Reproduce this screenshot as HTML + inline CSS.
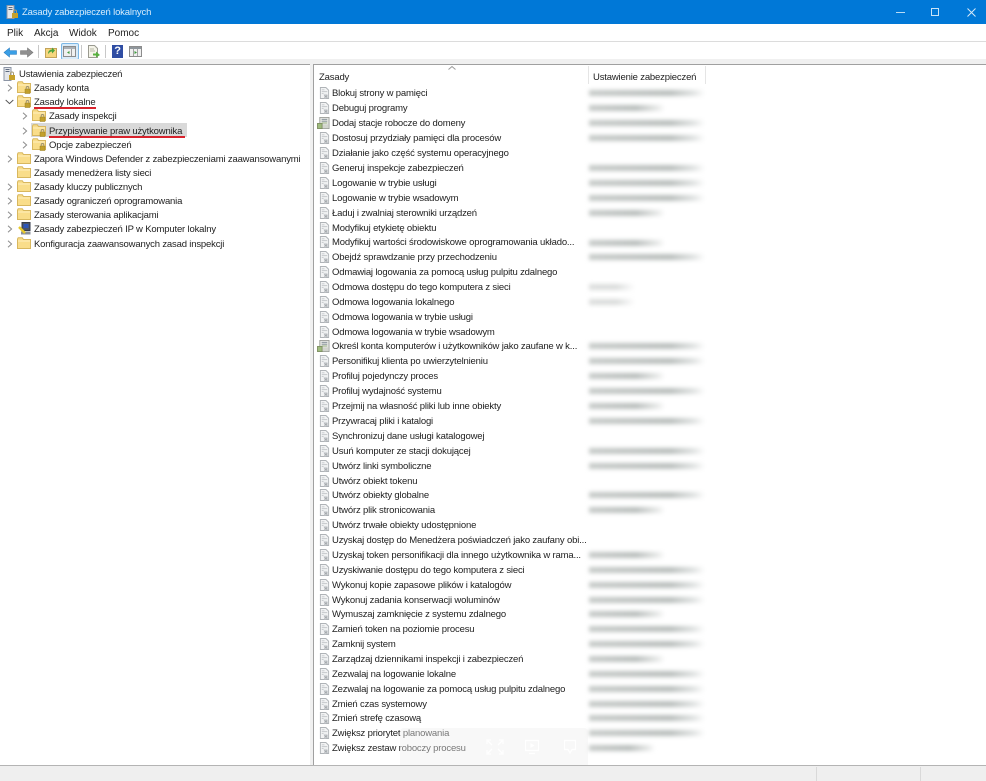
<!DOCTYPE html>
<html lang="pl"><head><meta charset="utf-8"><title>Zasady zabezpieczeń lokalnych</title>
<style>
html,body{margin:0;padding:0;background:#fff}
body{width:986px;height:781px;position:relative;overflow:hidden;font:9.5px/14px "Liberation Sans",sans-serif;color:#222;letter-spacing:-.17px}
.a{position:absolute}
.t,.r,.n{position:absolute;white-space:nowrap;height:14px;margin-top:2px;filter:blur(.3px)}
.r{left:332px}
.ic{position:absolute;width:11px;height:12px;transform:translateY(1px)}
.b{position:absolute;left:589px;height:6px;filter:blur(2.2px)}
.l{width:116px;background:linear-gradient(90deg,#c6cac8,#b8bdbb 70%,#dfe2e1 90%,#fff)}
.s{width:76px;background:linear-gradient(90deg,#c6cac8,#b8bdbb 62%,#e6e8e7 90%,#fff)}
.f{width:46px;background:linear-gradient(90deg,#dcdedd,#dadcdb 60%,#fff)}
svg{position:absolute;overflow:visible}
</style></head><body>
<svg width="0" height="0" style="position:absolute">
<defs>
<symbol id="doc" viewBox="0 0 12 13"><path d="M1.500.5h6l3 3v9h-9z" fill="#f2f3f4" stroke="#afb3b7"/><path d="M3 3h3M3 5h6M3 7h2" stroke="#c4c8cb"/><path d="M5 7.500l4 0 1 4-4 1z" fill="#d3d6d9"/><path d="M6 9l3 2.500M9 9l-3 2.500" stroke="#a0a5a9" stroke-width=".8"/></symbol>
<symbol id="srv" viewBox="0 0 14 13"><path d="M3 .5h10v12H3z" fill="#e7e8e4" stroke="#9a9d98"/><path d="M5 2.500h6M5 4.500h6" stroke="#7c8790"/><path d="M5 6.500h6" stroke="#96ae7e"/><path d="M.5 7h5v5.500h-5z" fill="#9fbc7d" stroke="#7f8f63"/><path d="M6 8h6v4H6z" fill="#d2d5ce"/></symbol>
<symbol id="fl" viewBox="0 0 14 12"><path d="M.5 2V11.500H13.500V2.500H6.500L5.300.8H1.200z" fill="#f9dd8a" stroke="#d8b75e"/><path d="M1 4H13" stroke="#fff0bd"/></symbol>
<symbol id="lk" viewBox="0 0 14 13"><path d="M.5 2V11.500H13.500V2.500H6.500L5.300.8H1.200z" fill="#f9dd8a" stroke="#d8b75e"/><path d="M1 4H13" stroke="#fff0bd"/><path d="M8 8h5v4.500H8z" fill="#c2a02c" stroke="#9a7f20" stroke-width=".5"/><path d="M9.200 8V6.800a1.300 1.300 0 012.600 0V8" fill="none" stroke="#9a9072" stroke-width=".9"/></symbol>
<symbol id="ch" viewBox="0 0 6 8"><path d="M1 .7L4.600 4 1 7.300" fill="none" stroke="#8c8c8c" stroke-width="1"/></symbol>
</defs></svg>

<!-- title bar -->
<div class="a" style="left:0;top:0;width:986px;height:24px;background:#0078d7"></div>
<svg style="left:6px;top:5px" width="13" height="14" viewBox="0 0 13 14"><path d="M1 .5h7v13H1z" fill="#e4e6ea" stroke="#8c95a5"/><path d="M2.500 2.500h4M2.500 4.500h4" stroke="#5d6b80"/><path d="M6 8h6v5H6z" fill="#c5a02a"/><path d="M7.500 8V6.500a1.500 1.500 0 013 0V8" fill="none" stroke="#a59a76"/></svg>
<div class="t" style="left:22px;top:4px;color:#d8ecfb">Zasady zabezpieczeń lokalnych</div>
<div class="a" style="left:896px;top:12px;width:9px;height:1px;background:#b9dcf5"></div>
<div class="a" style="left:931px;top:8px;width:6px;height:6px;border:1px solid #c9e3f6"></div>
<svg style="left:967px;top:8px" width="9" height="9"><path d="M.5.500l8 8M8.500.500l-8 8" stroke="#d5e9f8" stroke-width="1"/></svg>

<!-- menu -->
<div class="t" style="left:7px;top:25px;font-size:10px;letter-spacing:0">Plik</div>
<div class="t" style="left:34px;top:25px;font-size:10px;letter-spacing:0">Akcja</div>
<div class="t" style="left:69px;top:25px;font-size:10px;letter-spacing:0">Widok</div>
<div class="t" style="left:108px;top:25px;font-size:10px;letter-spacing:0">Pomoc</div>
<div class="a" style="left:0;top:41px;width:986px;height:1px;background:#dcdcdc"></div>

<!-- toolbar -->
<svg style="left:3px;top:47px" width="14" height="11"><path d="M1 5.500l5.500-4.500v2.700h7v3.600h-7V10z" fill="#3a9fe6" stroke="#2a7fc4" stroke-width=".6"/></svg>
<svg style="left:20px;top:47px" width="14" height="11"><path d="M13 5.500L7.500 1v2.700h-7v3.600h7V10z" fill="#8f8f8f" stroke="#777" stroke-width=".6"/></svg>
<div class="a" style="left:38px;top:45px;width:1px;height:13px;background:#c8c8c8"></div>
<svg style="left:45px;top:46px" width="12" height="12"><path d="M.5 2.500h11v9H.5z" fill="#f6d67e" stroke="#c2a35a"/><path d="M3 8C3 5 5 3.500 7 3.500V1.500l3 3-3 3V5.500C5 5.500 4 7 3 8z" fill="#4ba33c"/></svg>
<div class="a" style="left:61px;top:43px;width:16px;height:15px;background:#d9ebf9;border:1px solid #7db8e6;border-radius:2px"></div>
<svg style="left:63px;top:46px" width="13" height="11"><path d="M.5.500h12v10H.5z" fill="#f0f0f0" stroke="#8c8c8c"/><path d="M1 1h11v2H1z" fill="#aab0b6"/><path d="M8.500 3v7" stroke="#9a9a9a"/><path d="M6.500 5v3L4 6.500z" fill="#3d9b3d"/></svg>
<div class="a" style="left:81px;top:45px;width:1px;height:13px;background:#c8c8c8"></div>
<svg style="left:87px;top:45px" width="14" height="13"><path d="M1.500.500h6l3 3v9h-9z" fill="#f4f3e8" stroke="#9a9a90"/><path d="M3 4h4M3 6h5" stroke="#b9b9a8"/><path d="M6 8.500h3V6.500l4 3.500-4 2.500v-2H6z" fill="#58b03f"/></svg>
<div class="a" style="left:105px;top:45px;width:1px;height:13px;background:#c8c8c8"></div>
<div class="a" style="left:112px;top:45px;width:11px;height:13px;background:#2f4da3;color:#fff;font:bold 11px/13px 'Liberation Sans',sans-serif;text-align:center">?</div>
<svg style="left:129px;top:46px" width="14" height="12"><path d="M.5.500h12v10H.5z" fill="#f0f0f0" stroke="#8c8c8c"/><path d="M1 1h11v2H1z" fill="#8f969c"/><path d="M4.500 3v7M8.500 3v7" stroke="#a2a2a2"/><path d="M5.500 5v3L8 6.500z" fill="#3d9b3d"/></svg>

<!-- chrome -->
<div class="a" style="left:0;top:59px;width:986px;height:5px;background:#f0f0f0"></div>
<div class="a" style="left:0;top:64px;width:311px;height:1px;background:#a0a0a0"></div>
<div class="a" style="left:313px;top:64px;width:673px;height:1px;background:#a0a0a0"></div>
<div class="a" style="left:310px;top:64px;width:3px;height:702px;background:#f0f0f0"></div>
<div class="a" style="left:313px;top:65px;width:1px;height:700px;background:#a0a0a0"></div>

<!-- tree -->
<svg style="left:3px;top:67px" width="13" height="14" viewBox="0 0 13 14"><path d="M1 .5h7v13H1z" fill="#e4e6ea" stroke="#8c95a5"/><path d="M2.500 2.500h4M2.500 4.500h4" stroke="#5d6b80"/><path d="M6 8h6v5H6z" fill="#c5a02a"/><path d="M7.500 8V6.500a1.500 1.500 0 013 0V8" fill="none" stroke="#a59a76"/></svg>
<div class="n" style="left:19px;top:66px">Ustawienia zabezpieczeń</div>

<svg style="left:7px;top:84px" width="6" height="8"><use href="#ch"/></svg>
<svg style="left:17px;top:81px" width="14" height="13"><use href="#lk"/></svg>
<div class="n" style="left:34px;top:80px">Zasady konta</div>

<svg style="left:5px;top:99px" width="9" height="6"><path d="M.7 1L4.500 4.600 8.300 1" fill="none" stroke="#555" stroke-width="1"/></svg>
<svg style="left:17px;top:95px" width="14" height="13"><use href="#lk"/></svg>
<div class="n" style="left:34px;top:94px">Zasady lokalne</div>
<div class="a" style="left:34px;top:107px;width:62px;height:1.500px;background:#d8222c"></div>

<svg style="left:22px;top:112px" width="6" height="8"><use href="#ch"/></svg>
<svg style="left:32px;top:109px" width="14" height="13"><use href="#lk"/></svg>
<div class="n" style="left:49px;top:108px">Zasady inspekcji</div>

<div class="a" style="left:31px;top:123px;width:156px;height:14px;background:#d9d9d9"></div>
<svg style="left:22px;top:127px" width="6" height="8"><use href="#ch"/></svg>
<svg style="left:32px;top:124px" width="14" height="13"><use href="#lk"/></svg>
<div class="n" style="left:49px;top:123px">Przypisywanie praw użytkownika</div>
<div class="a" style="left:49px;top:136px;width:136px;height:1.500px;background:#d8222c"></div>

<svg style="left:22px;top:141px" width="6" height="8"><use href="#ch"/></svg>
<svg style="left:32px;top:138px" width="14" height="13"><use href="#lk"/></svg>
<div class="n" style="left:49px;top:137px">Opcje zabezpieczeń</div>

<svg style="left:7px;top:155px" width="6" height="8"><use href="#ch"/></svg>
<svg style="left:17px;top:152px" width="14" height="12"><use href="#fl"/></svg>
<div class="n" style="left:34px;top:151px">Zapora Windows Defender z zabezpieczeniami zaawansowanymi</div>

<svg style="left:17px;top:166px" width="14" height="12"><use href="#fl"/></svg>
<div class="n" style="left:34px;top:165px">Zasady menedżera listy sieci</div>

<svg style="left:7px;top:183px" width="6" height="8"><use href="#ch"/></svg>
<svg style="left:17px;top:180px" width="14" height="12"><use href="#fl"/></svg>
<div class="n" style="left:34px;top:179px">Zasady kluczy publicznych</div>

<svg style="left:7px;top:197px" width="6" height="8"><use href="#ch"/></svg>
<svg style="left:17px;top:194px" width="14" height="12"><use href="#fl"/></svg>
<div class="n" style="left:34px;top:193px">Zasady ograniczeń oprogramowania</div>

<svg style="left:7px;top:211px" width="6" height="8"><use href="#ch"/></svg>
<svg style="left:17px;top:208px" width="14" height="12"><use href="#fl"/></svg>
<div class="n" style="left:34px;top:207px">Zasady sterowania aplikacjami</div>

<svg style="left:7px;top:225px" width="6" height="8"><use href="#ch"/></svg>
<svg style="left:18px;top:222px" width="13" height="13"><path d="M4 .5h8v8H4z" fill="#4a5468" stroke="#333a48"/><path d="M5.500 2h5v4h-5z" fill="#2b55b8"/><path d="M3 9.500h9.500v3H3z" fill="#8a8f98"/><path d="M1 5l6 6" stroke="#e8c92a" stroke-width="2.500"/></svg>
<div class="n" style="left:34px;top:221px">Zasady zabezpieczeń IP w Komputer lokalny</div>

<svg style="left:7px;top:240px" width="6" height="8"><use href="#ch"/></svg>
<svg style="left:17px;top:237px" width="14" height="12"><use href="#fl"/></svg>
<div class="n" style="left:34px;top:236px">Konfiguracja zaawansowanych zasad inspekcji</div>

<!-- list header -->
<svg style="left:448px;top:66px" width="8" height="4"><path d="M.5 3.500L4 .5l3.500 3" fill="none" stroke="#9a9a9a"/></svg>
<div class="a" style="left:588px;top:66px;width:1px;height:18px;background:#e5e5e5"></div>
<div class="a" style="left:705px;top:66px;width:1px;height:18px;background:#e5e5e5"></div>
<div class="t" style="left:319px;top:69px">Zasady</div>
<div class="t" style="left:593px;top:69px">Ustawienie zabezpieczeń</div>

<!-- list rows -->
<div class="r" style="top:85px">Blokuj strony w pamięci</div>
<div class="r" style="top:100px">Debuguj programy</div>
<div class="r" style="top:115px">Dodaj stacje robocze do domeny</div>
<div class="r" style="top:130px">Dostosuj przydziały pamięci dla procesów</div>
<div class="r" style="top:145px">Działanie jako część systemu operacyjnego</div>
<div class="r" style="top:160px">Generuj inspekcje zabezpieczeń</div>
<div class="r" style="top:175px">Logowanie w trybie usługi</div>
<div class="r" style="top:190px">Logowanie w trybie wsadowym</div>
<div class="r" style="top:205px">Ładuj i zwalniaj sterowniki urządzeń</div>
<div class="r" style="top:220px">Modyfikuj etykietę obiektu</div>
<div class="r" style="top:234px">Modyfikuj wartości środowiskowe oprogramowania układo...</div>
<div class="r" style="top:249px">Obejdź sprawdzanie przy przechodzeniu</div>
<div class="r" style="top:264px">Odmawiaj logowania za pomocą usług pulpitu zdalnego</div>
<div class="r" style="top:279px">Odmowa dostępu do tego komputera z sieci</div>
<div class="r" style="top:294px">Odmowa logowania lokalnego</div>
<div class="r" style="top:309px">Odmowa logowania w trybie usługi</div>
<div class="r" style="top:324px">Odmowa logowania w trybie wsadowym</div>
<div class="r" style="top:338px">Określ konta komputerów i użytkowników jako zaufane w k...</div>
<div class="r" style="top:353px">Personifikuj klienta po uwierzytelnieniu</div>
<div class="r" style="top:368px">Profiluj pojedynczy proces</div>
<div class="r" style="top:383px">Profiluj wydajność systemu</div>
<div class="r" style="top:398px">Przejmij na własność pliki lub inne obiekty</div>
<div class="r" style="top:413px">Przywracaj pliki i katalogi</div>
<div class="r" style="top:428px">Synchronizuj dane usługi katalogowej</div>
<div class="r" style="top:443px">Usuń komputer ze stacji dokującej</div>
<div class="r" style="top:458px">Utwórz linki symboliczne</div>
<div class="r" style="top:473px">Utwórz obiekt tokenu</div>
<div class="r" style="top:487px">Utwórz obiekty globalne</div>
<div class="r" style="top:502px">Utwórz plik stronicowania</div>
<div class="r" style="top:517px">Utwórz trwałe obiekty udostępnione</div>
<div class="r" style="top:532px">Uzyskaj dostęp do Menedżera poświadczeń jako zaufany obi...</div>
<div class="r" style="top:547px">Uzyskaj token personifikacji dla innego użytkownika w rama...</div>
<div class="r" style="top:562px">Uzyskiwanie dostępu do tego komputera z sieci</div>
<div class="r" style="top:577px">Wykonuj kopie zapasowe plików i katalogów</div>
<div class="r" style="top:592px">Wykonuj zadania konserwacji woluminów</div>
<div class="r" style="top:606px">Wymuszaj zamknięcie z systemu zdalnego</div>
<div class="r" style="top:621px">Zamień token na poziomie procesu</div>
<div class="r" style="top:636px">Zamknij system</div>
<div class="r" style="top:651px">Zarządzaj dziennikami inspekcji i zabezpieczeń</div>
<div class="r" style="top:666px">Zezwalaj na logowanie lokalne</div>
<div class="r" style="top:681px">Zezwalaj na logowanie za pomocą usług pulpitu zdalnego</div>
<div class="r" style="top:696px">Zmień czas systemowy</div>
<div class="r" style="top:710px">Zmień strefę czasową</div>
<div class="r" style="top:725px">Zwiększ priorytet planowania</div>
<div class="r" style="top:740px">Zwiększ zestaw roboczy procesu</div>

<!-- list icons -->
<svg class="ic" style="left:319px;top:86px"><use href="#doc"/></svg>
<svg class="ic" style="left:319px;top:101px"><use href="#doc"/></svg>
<svg class="ic" style="left:317px;top:116px;width:13px"><use href="#srv"/></svg>
<svg class="ic" style="left:319px;top:131px"><use href="#doc"/></svg>
<svg class="ic" style="left:319px;top:146px"><use href="#doc"/></svg>
<svg class="ic" style="left:319px;top:161px"><use href="#doc"/></svg>
<svg class="ic" style="left:319px;top:176px"><use href="#doc"/></svg>
<svg class="ic" style="left:319px;top:191px"><use href="#doc"/></svg>
<svg class="ic" style="left:319px;top:206px"><use href="#doc"/></svg>
<svg class="ic" style="left:319px;top:221px"><use href="#doc"/></svg>
<svg class="ic" style="left:319px;top:235px"><use href="#doc"/></svg>
<svg class="ic" style="left:319px;top:250px"><use href="#doc"/></svg>
<svg class="ic" style="left:319px;top:265px"><use href="#doc"/></svg>
<svg class="ic" style="left:319px;top:280px"><use href="#doc"/></svg>
<svg class="ic" style="left:319px;top:295px"><use href="#doc"/></svg>
<svg class="ic" style="left:319px;top:310px"><use href="#doc"/></svg>
<svg class="ic" style="left:319px;top:325px"><use href="#doc"/></svg>
<svg class="ic" style="left:317px;top:339px;width:13px"><use href="#srv"/></svg>
<svg class="ic" style="left:319px;top:354px"><use href="#doc"/></svg>
<svg class="ic" style="left:319px;top:369px"><use href="#doc"/></svg>
<svg class="ic" style="left:319px;top:384px"><use href="#doc"/></svg>
<svg class="ic" style="left:319px;top:399px"><use href="#doc"/></svg>
<svg class="ic" style="left:319px;top:414px"><use href="#doc"/></svg>
<svg class="ic" style="left:319px;top:429px"><use href="#doc"/></svg>
<svg class="ic" style="left:319px;top:444px"><use href="#doc"/></svg>
<svg class="ic" style="left:319px;top:459px"><use href="#doc"/></svg>
<svg class="ic" style="left:319px;top:474px"><use href="#doc"/></svg>
<svg class="ic" style="left:319px;top:488px"><use href="#doc"/></svg>
<svg class="ic" style="left:319px;top:503px"><use href="#doc"/></svg>
<svg class="ic" style="left:319px;top:518px"><use href="#doc"/></svg>
<svg class="ic" style="left:319px;top:533px"><use href="#doc"/></svg>
<svg class="ic" style="left:319px;top:548px"><use href="#doc"/></svg>
<svg class="ic" style="left:319px;top:563px"><use href="#doc"/></svg>
<svg class="ic" style="left:319px;top:578px"><use href="#doc"/></svg>
<svg class="ic" style="left:319px;top:593px"><use href="#doc"/></svg>
<svg class="ic" style="left:319px;top:607px"><use href="#doc"/></svg>
<svg class="ic" style="left:319px;top:622px"><use href="#doc"/></svg>
<svg class="ic" style="left:319px;top:637px"><use href="#doc"/></svg>
<svg class="ic" style="left:319px;top:652px"><use href="#doc"/></svg>
<svg class="ic" style="left:319px;top:667px"><use href="#doc"/></svg>
<svg class="ic" style="left:319px;top:682px"><use href="#doc"/></svg>
<svg class="ic" style="left:319px;top:697px"><use href="#doc"/></svg>
<svg class="ic" style="left:319px;top:711px"><use href="#doc"/></svg>
<svg class="ic" style="left:319px;top:726px"><use href="#doc"/></svg>
<svg class="ic" style="left:319px;top:741px"><use href="#doc"/></svg>

<!-- blurred values -->
<div class="b l" style="top:90px"></div>
<div class="b s" style="top:105px"></div>
<div class="b l" style="top:120px"></div>
<div class="b l" style="top:135px"></div>
<div class="b l" style="top:165px"></div>
<div class="b l" style="top:180px"></div>
<div class="b l" style="top:195px"></div>
<div class="b s" style="top:210px"></div>
<div class="b s" style="top:240px"></div>
<div class="b l" style="top:254px"></div>
<div class="b f" style="top:284px"></div>
<div class="b f" style="top:299px"></div>
<div class="b l" style="top:343px"></div>
<div class="b l" style="top:358px"></div>
<div class="b s" style="top:373px"></div>
<div class="b l" style="top:388px"></div>
<div class="b s" style="top:403px"></div>
<div class="b l" style="top:418px"></div>
<div class="b l" style="top:448px"></div>
<div class="b l" style="top:463px"></div>
<div class="b l" style="top:492px"></div>
<div class="b s" style="top:507px"></div>
<div class="b s" style="top:552px"></div>
<div class="b l" style="top:567px"></div>
<div class="b l" style="top:582px"></div>
<div class="b l" style="top:597px"></div>
<div class="b s" style="top:611px"></div>
<div class="b l" style="top:626px"></div>
<div class="b l" style="top:641px"></div>
<div class="b s" style="top:656px"></div>
<div class="b l" style="top:671px"></div>
<div class="b l" style="top:686px"></div>
<div class="b l" style="top:701px"></div>
<div class="b l" style="top:715px"></div>
<div class="b l" style="top:730px"></div>
<div class="b s" style="top:745px;width:66px"></div>

<!-- translucent overlay -->
<div class="a" style="left:400px;top:728px;width:188px;height:37px;background:rgba(238,238,238,.42);border-radius:4px 4px 0 0"></div>
<svg style="left:486px;top:739px" width="18" height="16"><path d="M1 5V1h4M13 1h4v4M17 11v4h-4M5 15H1v-4M2 2l4 4M16 2l-4 4M16 14l-4-4M2 14l4-4" fill="none" stroke="#fff" stroke-width="1.300"/></svg>
<svg style="left:524px;top:739px" width="16" height="16"><path d="M1.500 1.500h13v10h-13zM5 14.500h6" fill="none" stroke="#fff" stroke-width="1.200"/><path d="M6.500 4v5l4-2.500z" fill="#fff"/></svg>
<svg style="left:563px;top:739px" width="14" height="16"><path d="M1.500 1.500h11v9H9l-2 3.500-2-3.500H1.500z" fill="none" stroke="#fff" stroke-width="1.200"/></svg>

<!-- status bar -->
<div class="a" style="left:0;top:765px;width:986px;height:1px;background:#b4b4b4"></div>
<div class="a" style="left:0;top:766px;width:986px;height:15px;background:#efefef"></div>
<div class="a" style="left:816px;top:767px;width:1px;height:14px;background:#d9d9d9"></div>
<div class="a" style="left:920px;top:767px;width:1px;height:14px;background:#d9d9d9"></div>
</body></html>
